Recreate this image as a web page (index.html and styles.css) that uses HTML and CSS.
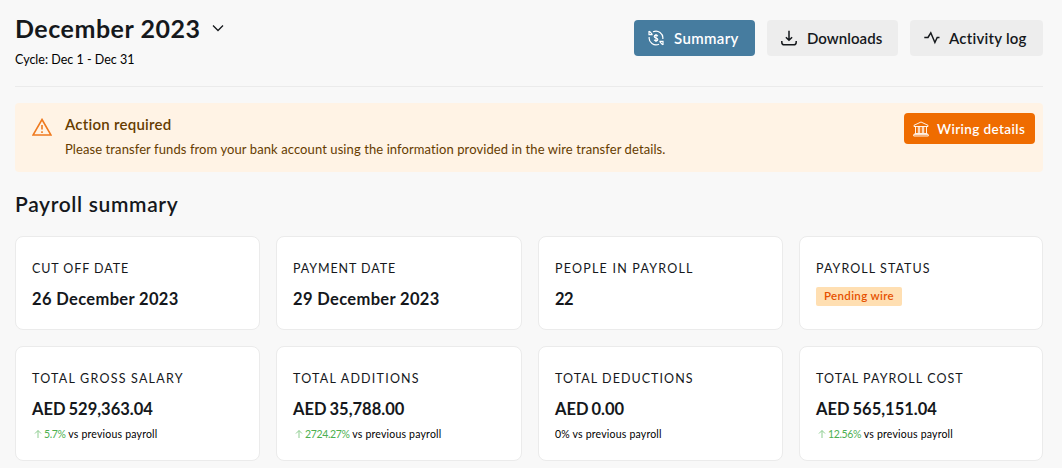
FILE: index.html
```html
<!DOCTYPE html>
<html lang="en">
<head>
    <meta charset="UTF-8">
    <meta name="viewport" content="width=device-width, initial-scale=1.0">
    <title>Payroll - December 2023</title>
    <link rel="stylesheet" href="styles.css">
</head>
<body>
    <header class="page-header">
        <div class="period">
            <h1><span class="period-name">December 2023</span>
                <svg class="chevron" viewBox="0 0 12 8"><path d="M1 1.500l5 5l5-5"></path></svg>
            </h1>
            <p class="cycle">Cycle: Dec 1 - Dec 31</p>
        </div>
        <nav class="tabs">
            <a class="tab tab-summary active">
                <svg class="tab-icon" viewBox="0 0 16 16">
                    <path d="M5 1.800A6.900 6.900 0 0 1 14.800 9M1.200 7A6.900 6.900 0 0 0 11 14.200"></path>
                    <path d="M1 1v3.600h3.600M1.300 1.200l2.800 3M15 15v-3.600h-3.600M14.700 14.800l-2.800-3"></path>
                    <path d="M9.800 6.200C9.500 5.500 8.900 5.200 8 5.200c-1 0-1.800.5-1.800 1.300c0 2 3.600 1 3.600 3c0 .8-.8 1.300-1.800 1.300c-.9 0-1.500-.3-1.800-1M8 4v8"></path>
                </svg>
                <span>Summary</span>
            </a>
            <a class="tab tab-downloads">
                <svg class="tab-icon" viewBox="0 0 16 16">
                    <path d="M8 .8v9.400M4.900 7.200L8 10.300l3.100-3.100"></path>
                    <path d="M.8 11v1.200c0 1.600 1 2.600 2.600 2.600h9.200c1.600 0 2.600-1 2.600-2.600V11"></path>
                </svg>
                <span>Downloads</span>
            </a>
            <a class="tab tab-activity">
                <svg class="tab-icon" viewBox="0 0 16 16">
                    <path d="M.3 7.500H4l2.800-4.700l4.100 9.700l2.300-5h2.300"></path>
                </svg>
                <span>Activity log</span>
            </a>
        </nav>
    </header>

    <section class="alert">
        <svg class="alert-icon" viewBox="0 0 20 18">
            <path d="M10 1.500L19 17H1z"></path>
            <path d="M10 7v4.500M10 13.200v1.800"></path>
        </svg>
        <div class="alert-body">
            <h3>Action required</h3>
            <p>Please transfer funds from your bank account using the information provided in the wire transfer details.</p>
        </div>
        <button class="wire-button">
            <svg viewBox="0 0 16 16">
                <path d="M1 5.500V4.300L8 1l7 3.300v1.200zM2.500 5.500v6.700M5.300 5.500v6.700M6.700 5.500v6.700M9.300 5.500v6.700M10.700 5.500v6.700M13.500 5.500v6.700M1.500 12.500h13M.7 15V13.600h14.600V15z"></path>
            </svg>
            <span>Wiring details</span>
        </button>
    </section>

    <h2>Payroll summary</h2>

    <div class="cards">
        <div class="card">
            <div class="label tight">Cut off date</div>
            <div class="value">26 December 2023</div>
        </div>
        <div class="card">
            <div class="label tight">Payment date</div>
            <div class="value">29 December 2023</div>
        </div>
        <div class="card">
            <div class="label wide">People in payroll</div>
            <div class="value count">22</div>
        </div>
        <div class="card">
            <div class="label">Payroll status</div>
            <span class="badge">Pending wire</span>
        </div>
        <div class="card">
            <div class="label wide">Total gross salary</div>
            <div class="value amount">AED 529,363.04</div>
            <div class="change"><svg class="up" viewBox="0 0 8 8"><path d="M4 8V.7M1 3.500l3-3l3 3"></path></svg><span class="percent">5.7%</span> vs previous payroll</div>
        </div>
        <div class="card">
            <div class="label wide">Total additions</div>
            <div class="value amount">AED 35,788.00</div>
            <div class="change"><svg class="up" viewBox="0 0 8 8"><path d="M4 8V.7M1 3.500l3-3l3 3"></path></svg><span class="percent">2724.27%</span> vs previous payroll</div>
        </div>
        <div class="card">
            <div class="label">Total deductions</div>
            <div class="value amount">AED 0.00</div>
            <div class="change">0% vs previous payroll</div>
        </div>
        <div class="card">
            <div class="label">Total payroll cost</div>
            <div class="value amount">AED 565,151.04</div>
            <div class="change"><svg class="up" viewBox="0 0 8 8"><path d="M4 8V.7M1 3.500l3-3l3 3"></path></svg><span class="percent">12.56%</span> vs previous payroll</div>
        </div>
    </div>
</body>
</html>
```
FILE: styles.css
```css
* {
    margin: 0;
    padding: 0;
    box-sizing: border-box;
}

body {
    font-family: Lato, 'Open Sans', sans-serif;
    background: #f8f8f8;
    color: #15181c;
    padding: 0 19px 0 15px;
    height: 468px;
    overflow: hidden;
}

svg {
    fill: none;
    stroke: currentColor;
    flex-shrink: 0;
}

.page-header {
    display: flex;
    justify-content: space-between;
    height: 87px;
    padding-top: 13px;
    border-bottom: 1px solid #ebebeb;
}

h1 {
    display: flex;
    align-items: center;
    gap: 11px;
    font-size: 25px;
    line-height: 30px;
    font-weight: 700;
    letter-spacing: 0.52px;
    white-space: nowrap;
}

.chevron {
    width: 12px;
    height: 8px;
    stroke-width: 1.3;
}

.cycle {
    margin-top: 8px;
    font-size: 12.5px;
    line-height: 18px;
    color: #000;
}

.tabs {
    display: flex;
    gap: 12px;
    margin-top: 7px;
}

.tab {
    display: flex;
    align-items: center;
    gap: 10px;
    height: 36px;
    padding-left: 14px;
    border-radius: 4px;
    background: #ededed;
    font-size: 15px;
    font-weight: 600;
    letter-spacing: 0.05px;
    white-space: nowrap;
}

.tab span {
    padding-bottom: 1px;
}

.tab-summary {
    width: 121px;
    letter-spacing: 0.35px;
}

.tab-downloads {
    width: 131px;
}

.tab-activity {
    width: 133px;
    gap: 9px;
    letter-spacing: 0.25px;
}

.tab.active {
    background: #467c9f;
    color: #fff;
}

.tab-icon {
    width: 16px;
    height: 16px;
    stroke-width: 1.5;
}

.active .tab-icon {
    stroke-width: 1.2;
}

.alert {
    display: flex;
    align-items: flex-start;
    height: 69px;
    margin-top: 16px;
    padding: 10px 8px 0 17px;
    border-radius: 4px;
    background: #fff3e5;
    color: #663c00;
}

.alert-icon {
    width: 20px;
    height: 18px;
    margin-top: 5px;
    color: #ef7a1f;
    stroke-width: 1.6;
}

.alert-body {
    flex: 1;
    margin: -1px 0 0 13px;
    white-space: nowrap;
}

.alert h3 {
    font-size: 15px;
    line-height: 24px;
    font-weight: 600;
    letter-spacing: 0.25px;
}

.alert p {
    margin-top: 4px;
    font-size: 13px;
    line-height: 18px;
    letter-spacing: 0.09px;
}

.wire-button {
    display: flex;
    align-items: center;
    gap: 8px;
    width: 131px;
    height: 31px;
    padding-left: 9px;
    border: none;
    border-radius: 4px;
    background: #ef6c00;
    color: #fff;
    font: 600 13.5px Lato, sans-serif;
    letter-spacing: 0.4px;
    white-space: nowrap;
}

.wire-button svg {
    width: 16px;
    height: 16px;
    stroke-width: 0.9;
}

h2 {
    margin-top: 17px;
    font-size: 21px;
    line-height: 30px;
    font-weight: 600;
    letter-spacing: 0.65px;
}

.cards {
    display: grid;
    grid-template-columns: 245fr 246fr 245fr 244fr;
    grid-template-rows: 94px 115px;
    gap: 16px;
    margin-top: 17px;
}

.card {
    padding: 23px 16px 0;
    border: 1px solid #ebebeb;
    border-radius: 8px;
    background: #fff;
    white-space: nowrap;
}

.label {
    font-size: 12.5px;
    line-height: 18px;
    letter-spacing: 1.05px;
    text-transform: uppercase;
}

.label.tight {
    letter-spacing: 0.9px;
}

.label.wide {
    letter-spacing: 1.22px;
}

.value {
    margin-top: 9px;
    font-size: 16.5px;
    line-height: 24px;
    font-weight: 700;
    letter-spacing: 0.35px;
}

.count {
    letter-spacing: -0.5px;
}

.amount {
    letter-spacing: 0;
    word-spacing: -1px;
}

.badge {
    display: block;
    width: 86px;
    height: 19px;
    margin-top: 9px;
    padding-left: 8px;
    border-radius: 2px;
    background: #ffdfb2;
    color: #e65100;
    font-size: 11.5px;
    line-height: 18px;
    font-weight: 600;
    letter-spacing: 0.35px;
}

.change {
    display: flex;
    align-items: center;
    margin-top: 5px;
    font-size: 10.5px;
    line-height: 16px;
    letter-spacing: 0.2px;
    color: #000;
    white-space: pre;
}

.up {
    width: 8px;
    height: 8px;
    margin: 0 2px;
    stroke: #81c784;
    stroke-width: 0.9;
}

.percent {
    color: #4caf50;
    letter-spacing: -0.35px;
}
```
